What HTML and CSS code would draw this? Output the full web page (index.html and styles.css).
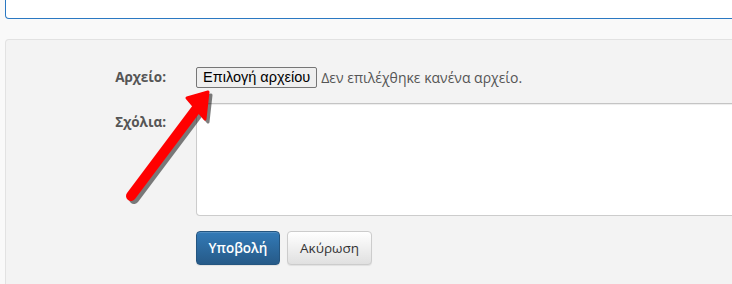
FILE: index.html
```html
<!DOCTYPE html>
<html lang="el">

<head>
    <meta charset="UTF-8">
    <meta name="viewport" content="width=device-width, initial-scale=1.0">
    <title>Αποστολή αρχείου</title>
    <link rel="stylesheet" href="styles.css">
</head>

<body>
    <div class="top-input"></div>

    <form class="panel">
        <div class="row">
            <label class="label" for="file">Αρχείο:</label>
            <div class="control file-control">
                <span class="file-btn">Επιλογή αρχείου</span>
                <span class="file-name">Δεν επιλέχθηκε κανένα αρχείο.</span>
            </div>
        </div>

        <div class="row">
            <label class="label label-area" for="comments">Σχόλια:</label>
            <div class="control">
                <div class="textarea" id="comments"></div>
            </div>
        </div>

        <div class="row">
            <div></div>
            <div class="control buttons">
                <button type="button" class="btn btn-primary">Υποβολή</button>
                <button type="button" class="btn btn-default">Ακύρωση</button>
            </div>
        </div>

        <!-- red arrow pointing at the file button -->
        <svg class="arrow" width="100" height="130" viewBox="0 0 100 130">
            <g transform="translate(3,3)" opacity="0.5">
                <line x1="12" y1="112" x2="78" y2="24" stroke="#000" stroke-width="10" stroke-linecap="round" />
                <polygon points="89,8 68,14 86,35" fill="#000" stroke="#000" stroke-width="3" stroke-linejoin="round" />
            </g>
            <line x1="12" y1="112" x2="78" y2="24" stroke="#f00" stroke-width="10" stroke-linecap="round" />
            <polygon points="89,8 68,14 86,35" fill="#f00" stroke="#f00" stroke-width="3" stroke-linejoin="round" />
        </svg>
    </form>
</body>

</html>
```

FILE: styles.css
```css
* {
    box-sizing: border-box;
}

html,
body {
    margin: 0;
    padding: 0;
    overflow: hidden;
}

body {
    background-color: #f9f9f9;
    font-family: "Open Sans", "Liberation Sans", sans-serif;
    font-size: 13px;
    color: #555;
    height: 284px;
}

.top-input {
    margin-left: 5px;
    margin-right: -10px;
    height: 19px;
    background-color: #fff;
    border: 1px solid #2a78c2;
    border-top: none;
    border-radius: 0 0 4px 4px;
}

.panel {
    position: relative;
    margin: 20px -20px 0 5px;
    padding-top: 27px;
    height: 245px;
    background-color: #f3f3f3;
    border: 1px solid #e2e2e2;
    border-bottom: none;
    border-radius: 4px 4px 0 0;
    overflow: hidden;
}

.row {
    display: grid;
    grid-template-columns: 160px 1fr;
    column-gap: 30px;
    margin-bottom: 15px;
}

.label {
    text-align: right;
    font-weight: bold;
    font-size: 13.5px;
    color: #555;
    line-height: 20px;
}

.label-area {
    padding-top: 9px;
}

.file-control {
    display: flex;
    align-items: center;
    gap: 4px;
}

.file-btn {
    display: inline-block;
    height: 21px;
    padding: 0 6px;
    line-height: 19px;
    font-family: "Liberation Sans", Arial, sans-serif;
    font-size: 14.5px;
    color: #000;
    background-color: #efefef;
    border: 1px solid #767676;
    border-radius: 2px;
}

.file-name {
    color: #555;
    font-size: 14px;
}

.textarea {
    height: 113px;
    background-color: #fff;
    border: 1px solid #ccc;
    border-top-color: #c4c4c4;
    border-radius: 4px;
    box-shadow: inset 0 1px 1px rgba(0, 0, 0, 0.075);
}

.buttons {
    display: flex;
    gap: 7px;
}

.btn {
    height: 34px;
    padding: 0 10px;
    font-family: "Open Sans", "Liberation Sans", sans-serif;
    font-size: 13.5px;
    border-radius: 4px;
    border: 1px solid transparent;
}

.btn-primary {
    width: 84px;
    color: #fff;
    font-weight: 600;
    background-image: linear-gradient(to bottom, #337ab7 0, #265a88 100%);
    border-color: #245580;
    box-shadow: inset 0 1px 0 rgba(255, 255, 255, 0.15), 0 1px 1px rgba(0, 0, 0, 0.075);
}

.btn-default {
    width: 85px;
    color: #333;
    background-image: linear-gradient(to bottom, #fff 0, #e0e0e0 100%);
    border-color: #ccc;
    box-shadow: inset 0 1px 0 rgba(255, 255, 255, 0.15), 0 1px 1px rgba(0, 0, 0, 0.075);
}

.arrow {
    position: absolute;
    left: 113px;
    top: 44px;
}
```
